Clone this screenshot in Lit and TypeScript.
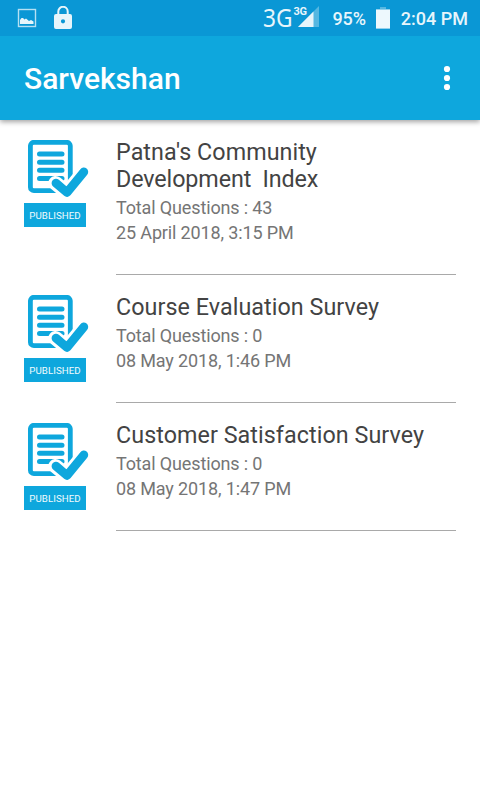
import { LitElement, html, css } from "lit";
import { customElement, property } from "lit/decorators.js";

interface Survey {
  title: string[];
  questions: number;
  date: string;
}

const surveys: Survey[] = [
  { title: ["Patna's Community", "Development  Index"], questions: 43, date: "25 April 2018, 3:15 PM" },
  { title: ["Course Evaluation Survey"], questions: 0, date: "08 May 2018, 1:46 PM" },
  { title: ["Customer Satisfaction Survey"], questions: 0, date: "08 May 2018, 1:47 PM" },
];

@customElement("status-bar")
class StatusBar extends LitElement {
  static styles = css`
    :host { display: flex; align-items: center; height: 36px; box-sizing: border-box; padding: 0 12px 0 17px; background: #0a97d5; color: #e7f5fb; font: 500 18px/36px Roboto, sans-serif; }
    svg { display: block; flex: none; }
    .lock { margin-left: 17px; }
    .network { margin-left: auto; width: 30px; height: 36px; font: 25.5px/34px "Noto Sans", sans-serif; }
    .network span { display: inline-block; transform: scaleX(0.89); transform-origin: left; }
    .cell { position: relative; width: 27px; height: 36px; margin-right: 12px; }
    .cell svg { position: absolute; left: 5px; top: 6px; }
    .cell span { position: absolute; left: 0; top: 5px; font: 700 11px/13px Roboto, sans-serif; letter-spacing: -0.3px; }
    .battery { margin: 0 11px 0 10px; }
    .text { white-space: nowrap; margin-top: 1px; }
    .percent { letter-spacing: -0.1px; }
  `;

  render() {
    return html`
      <svg width="20" height="20" viewBox="0 0 20 20">
        <rect x="1.5" y="1.5" width="17" height="17" fill="none" stroke="#b5e0f3" stroke-width="1.4" />
        <path d="M3 16V12L4.5 10H6L7.5 11.5 9 10.5 12 13 14 12 16.5 13.5V16Z" fill="#e7f5fb" />
      </svg>
      <svg class="lock" width="18" height="24" viewBox="0 0 18 24">
        <path d="M4.3 9V5.5a4.7 4.7 0 0 1 9.4 0V9" fill="none" stroke="#e7f5fb" stroke-width="2" />
        <path fill-rule="evenodd" d="M2 8H16a2 2 0 0 1 2 2V21a2 2 0 0 1-2 2H2a2 2 0 0 1-2-2V10a2 2 0 0 1 2-2ZM9 13.2a2.1 2.1 0 1 0 0 4.2 2.1 2.1 0 0 0 0-4.2Z" fill="#e7f5fb" />
      </svg>
      <div class="network"><span>3G</span></div>
      <div class="cell">
        <svg width="21" height="21" viewBox="0 0 21 21">
          <path d="M0 21 21 0V21Z" fill="#55b7e1" />
          <path d="M0 21 15.5 5.5V21Z" fill="#e7f5fb" />
        </svg>
        <span>3G</span>
      </div>
      <div class="text percent">95%</div>
      <svg class="battery" width="14" height="22" viewBox="0 0 14 22">
        <path d="M4 0H10V2H14V4H0V2H4Z" fill="#55b7e1" />
        <path d="M0 2.6H14V21.6H0Z" fill="#edf8fd" />
      </svg>
      <div class="text">2:04 PM</div>
    `;
  }
}

@customElement("survey-item")
class SurveyItem extends LitElement {
  static styles = css`
    :host { display: grid; grid-template-columns: 92px 1fr; padding: 0 24px; }
    .side { padding-top: 20px; }
    svg { display: block; }
    .badge { width: 62px; height: 24px; margin-top: 2px; background: #0ea7dd; color: #f2fbfe; font: 400 9.7px/25px Roboto, sans-serif; letter-spacing: 0.05px; text-align: center; }
    .body { padding: 19px 0 29px; border-bottom: 1px solid #a9a9a9; }
    .title { margin: 0; color: #434343; font: 400 23.3px/27px Roboto, sans-serif; white-space: pre; letter-spacing: 0.06px; }
    .title span { display: block; }
    .title span + span { letter-spacing: -0.1px; }
    .meta { color: #757575; font: 400 18px/25px Roboto, sans-serif; letter-spacing: -0.14px; }
    .info { padding-top: 2px; }
  `;

  @property({ attribute: false }) survey!: Survey;

  render() {
    return html`
      <div class="side">
        <svg width="66" height="61" viewBox="0 0 66 61" fill="none" stroke="#0ea7dd" stroke-linecap="round" stroke-linejoin="round">
          <rect x="6.4" y="2.3" width="39.9" height="48.4" rx="3.5" stroke-width="4.8" />
          <path d="M15.5 14H38M15.5 22.3H38M15.5 30.3H38M15.5 38.4H38" stroke-width="5" />
          <path d="M31.5 43.2 43 52.5 60 31.8" stroke="#fff" stroke-width="14.5" />
          <path d="M32 43.2 43 52.5 59.8 32" stroke-width="8.8" />
        </svg>
        <div class="badge">PUBLISHED</div>
      </div>
      <div class="body">
        <h2 class="title">${this.survey.title.map((line) => html`<span>${line}</span>`)}</h2>
        <div class="info">
          <div class="meta">Total Questions : ${this.survey.questions}</div>
          <div class="meta">${this.survey.date}</div>
        </div>
      </div>
    `;
  }
}

@customElement("app-root")
class AppRoot extends LitElement {
  static styles = css`
    :host { display: block; width: 480px; height: 800px; overflow: hidden; background: #fff; }
    .toolbar { display: flex; align-items: center; justify-content: space-between; height: 84px; box-sizing: border-box; padding: 0 24px; background: #0ea7dd; box-shadow: 0 2px 5px rgba(0, 0, 0, 0.36); clip-path: inset(0 0 -10px 0); }
    h1 { margin: 2px 0 0; color: #fff; font: 500 30px/36px Roboto, sans-serif; }
    .menu { display: block; width: 18px; height: 26px; }
  `;

  render() {
    return html`
      <status-bar></status-bar>
      <header class="toolbar">
        <h1>Sarvekshan</h1>
        <svg class="menu" viewBox="0 0 18 26" fill="#fff">
          <circle cx="9" cy="4" r="3.1" /><circle cx="9" cy="13" r="3.1" /><circle cx="9" cy="22" r="3.1" />
        </svg>
      </header>
      <main>${surveys.map((s) => html`<survey-item .survey=${s}></survey-item>`)}</main>
    `;
  }
}
